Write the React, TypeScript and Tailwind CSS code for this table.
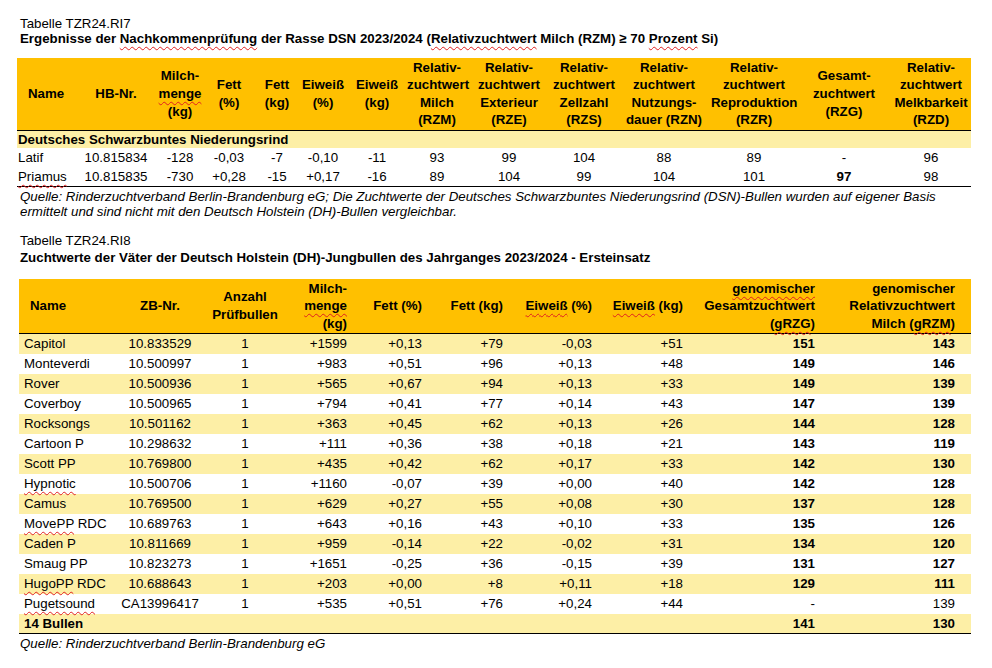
import type { ReactNode } from 'react'

// spell-check squiggle as it shows in the source document
function Sq({ children }: { children: ReactNode }) {
  return (
    <span className="underline decoration-wavy decoration-[#e02020] decoration-1 underline-offset-[3px]">
      {children}
    </span>
  )
}

const DSN_ROWS = [
  { name: 'Latif', hb: '10.815834', v: ['-128', '-0,03', '-7', '-0,10', '-11', '93', '99', '104', '88', '89', '-', '96'] },
  { name: 'Priamus', hb: '10.815835', v: ['-730', '+0,28', '-15', '+0,17', '-16', '89', '104', '99', '104', '101', '97', '98'] },
]

const DH_ROWS: [string, string, string, string, string, string, string, string, string][] = [
  ['Capitol', '10.833529', '+1599', '+0,13', '+79', '-0,03', '+51', '151', '143'],
  ['Monteverdi', '10.500997', '+983', '+0,51', '+96', '+0,13', '+48', '149', '146'],
  ['Rover', '10.500936', '+565', '+0,67', '+94', '+0,13', '+33', '149', '139'],
  ['Coverboy', '10.500965', '+794', '+0,41', '+77', '+0,14', '+43', '147', '139'],
  ['Rocksongs', '10.501162', '+363', '+0,45', '+62', '+0,13', '+26', '144', '128'],
  ['Cartoon P', '10.298632', '+111', '+0,36', '+38', '+0,18', '+21', '143', '119'],
  ['Scott PP', '10.769800', '+435', '+0,42', '+62', '+0,17', '+33', '142', '130'],
  ['Hypnotic', '10.500706', '+1160', '-0,07', '+39', '+0,00', '+40', '142', '128'],
  ['Camus', '10.769500', '+629', '+0,27', '+55', '+0,08', '+30', '137', '128'],
  ['MovePP RDC', '10.689763', '+643', '+0,16', '+43', '+0,10', '+33', '135', '126'],
  ['Caden P', '10.811669', '+959', '-0,14', '+22', '-0,02', '+31', '134', '120'],
  ['Smaug PP', '10.823273', '+1651', '-0,25', '+36', '-0,15', '+39', '131', '127'],
  ['HugoPP RDC', '10.688643', '+203', '+0,00', '+8', '+0,11', '+18', '129', '111'],
  ['Pugetsound', 'CA13996417', '+535', '+0,51', '+76', '+0,24', '+44', '-', '139'],
]

function DhName({ name }: { name: string }) {
  if (name === 'Hypnotic' || name === 'Pugetsound') return <Sq>{name}</Sq>
  if (name.endsWith(' RDC')) return <><Sq>{name.replace(' RDC', '')}</Sq> RDC</>
  return <>{name}</>
}

const DSN_COLS = [58, 82, 46, 52, 44, 48, 60, 60, 84, 66, 94, 86, 94, 80]
const DH_COLS = [101, 80, 90, 61, 75, 81, 89, 91, 132, 152]

export default function App() {
  const th1 = 'p-0 font-bold text-center align-middle whitespace-nowrap border-b border-black'
  const th2 = 'p-0 font-bold align-middle whitespace-nowrap border-b border-black leading-[17.5px]'
  const num = 'p-0 pr-[4px] text-right'

  return (
    <div className="w-[992px] h-[668px] bg-white text-black text-[13.3px] overflow-hidden"
      style={{ fontFamily: '"Liberation Sans", Arial, sans-serif' }}>

      {/* Tabelle TZR24.RI7 */}
      <div className="pl-[20px] pt-[16px] leading-[15px]">
        <div>Tabelle TZR24.RI7</div>
        <div className="font-bold">
          Ergebnisse der <Sq>Nachkommenprüfung</Sq> der Rasse DSN 2023/2024 (<Sq>Relativzuchtwert</Sq> Milch (RZM) ≥ 70 <Sq>Prozent</Sq> Si)
        </div>
      </div>

      <table className="ml-[17px] mt-[12px] table-fixed border-collapse w-[954px]">
        <colgroup>
          {DSN_COLS.map((w, i) => <col key={i} style={{ width: w }} />)}
        </colgroup>
        <thead>
          <tr className="h-[72px] bg-[#ffc000] leading-[17.6px]">
            <th className={th1}>Name</th>
            <th className={th1}>HB-Nr.</th>
            <th className={th1}>Milch-<br /><Sq>menge</Sq><br />(kg)</th>
            <th className={th1}>Fett<br />(%)</th>
            <th className={th1}>Fett<br />(kg)</th>
            <th className={th1}>Eiweiß<br />(%)</th>
            <th className={th1}>Eiweiß<br />(kg)</th>
            <th className={th1}>Relativ-<br />zuchtwert<br />Milch<br />(RZM)</th>
            <th className={th1}>Relativ-<br />zuchtwert<br />Exterieur<br />(RZE)</th>
            <th className={th1}>Relativ-<br />zuchtwert<br />Zellzahl<br />(RZS)</th>
            <th className={th1}>Relativ-<br />zuchtwert<br />Nutzungs-<br />dauer (RZN)</th>
            <th className={th1}>Relativ-<br />zuchtwert<br />Reproduktion<br />(RZR)</th>
            <th className={th1}>Gesamt-<br />zuchtwert<br />(RZG)</th>
            <th className={th1}>Relativ-<br />zuchtwert<br />Melkbarkeit<br />(RZD)</th>
          </tr>
        </thead>
        <tbody className="leading-[15px]">
          <tr className="h-[18px]">
            <td colSpan={14} className="p-0 pl-[1px] font-bold bg-[#fdefa6]">Deutsches Schwarzbuntes Niederungsrind</td>
          </tr>
          {DSN_ROWS.map((r, ri) => (
            <tr key={r.name} className={ri === DSN_ROWS.length - 1 ? 'h-[19px] border-b border-black' : 'h-[19px]'}>
              <td className="p-0 pl-[1px]">{r.name === 'Priamus' ? <Sq>{r.name}</Sq> : r.name}</td>
              <td className="p-0 text-center">{r.hb}</td>
              {r.v.map((v, i) => (
                <td key={i} className={i === 10 && v !== '-' ? 'p-0 text-center font-bold' : 'p-0 text-center'}>{v}</td>
              ))}
            </tr>
          ))}
        </tbody>
      </table>

      <div className="pl-[20px] mt-[2px] leading-[15px] italic">
        Quelle: Rinderzuchtverband Berlin-Brandenburg eG; Die Zuchtwerte der Deutsches Schwarzbuntes Niederungsrind (DSN)-Bullen wurden auf eigener Basis<br />
        ermittelt und sind nicht mit den Deutsch Holstein (DH)-Bullen vergleichbar.
      </div>

      {/* Tabelle TZR24.RI8 */}
      <div className="pl-[20px] mt-[13px] leading-[17px]">
        <div>Tabelle TZR24.RI8</div>
        <div className="font-bold">
          Zuchtwerte der Väter der Deutsch Holstein (DH)-Jungbullen des Jahrganges 2023/2024 - Ersteinsatz
        </div>
      </div>

      <table className="ml-[19px] mt-[13px] table-fixed border-collapse w-[952px]">
        <colgroup>
          {DH_COLS.map((w, i) => <col key={i} style={{ width: w }} />)}
        </colgroup>
        <thead>
          <tr className="h-[55px] bg-[#ffc000]">
            <th className={`${th2} text-left pl-[11px]`}>Name</th>
            <th className={`${th2} text-center`}>ZB-Nr.</th>
            <th className={`${th2} text-center`}>Anzahl<br />Prüfbullen</th>
            <th className={`${th2} text-right pr-[4px]`}>Milch-<br /><Sq>menge</Sq><br />(kg)</th>
            <th className={`${th2} text-right pr-[4px]`}>Fett (%)</th>
            <th className={`${th2} text-right pr-[4px]`}>Fett (kg)</th>
            <th className={`${th2} text-right pr-[4px]`}><Sq>Eiweiß</Sq> (%)</th>
            <th className={`${th2} text-right pr-[4px]`}><Sq>Eiweiß</Sq> (kg)</th>
            <th className={`${th2} text-right pr-[4px]`}><Sq>genomischer</Sq><br />Gesamtzuchtwert<br />(<Sq>gRZG</Sq>)</th>
            <th className={`${th2} text-right pr-[16px]`}>genomischer<br />Relativzuchtwert<br />Milch (<Sq>gRZM</Sq>)</th>
          </tr>
        </thead>
        <tbody className="leading-[15px]">
          {DH_ROWS.map((r, ri) => (
            <tr key={r[0]} className={ri % 2 === 0 ? 'h-[20px] bg-[#fdefa6]' : 'h-[20px]'}>
              <td className="p-0 pl-[5px] whitespace-nowrap"><DhName name={r[0]} /></td>
              <td className="p-0 text-center">{r[1]}</td>
              <td className="p-0 text-center">1</td>
              <td className={num}>{r[2]}</td>
              <td className={num}>{r[3]}</td>
              <td className={num}>{r[4]}</td>
              <td className={num}>{r[5]}</td>
              <td className={num}>{r[6]}</td>
              <td className={r[7] === '-' ? num : `${num} font-bold`}>{r[7]}</td>
              <td className={`p-0 pr-[16px] text-right ${r[0] === 'Pugetsound' ? '' : 'font-bold'}`}>{r[8]}</td>
            </tr>
          ))}
          <tr className="h-[20px] bg-[#fdefa6] border-b border-black font-bold">
            <td colSpan={8} className="p-0 pl-[5px]">14 Bullen</td>
            <td className={num}>141</td>
            <td className="p-0 pr-[16px] text-right">130</td>
          </tr>
        </tbody>
      </table>

      <div className="pl-[20px] mt-[2px] leading-[15px] italic">
        Quelle: Rinderzuchtverband Berlin-Brandenburg eG
      </div>
    </div>
  )
}
